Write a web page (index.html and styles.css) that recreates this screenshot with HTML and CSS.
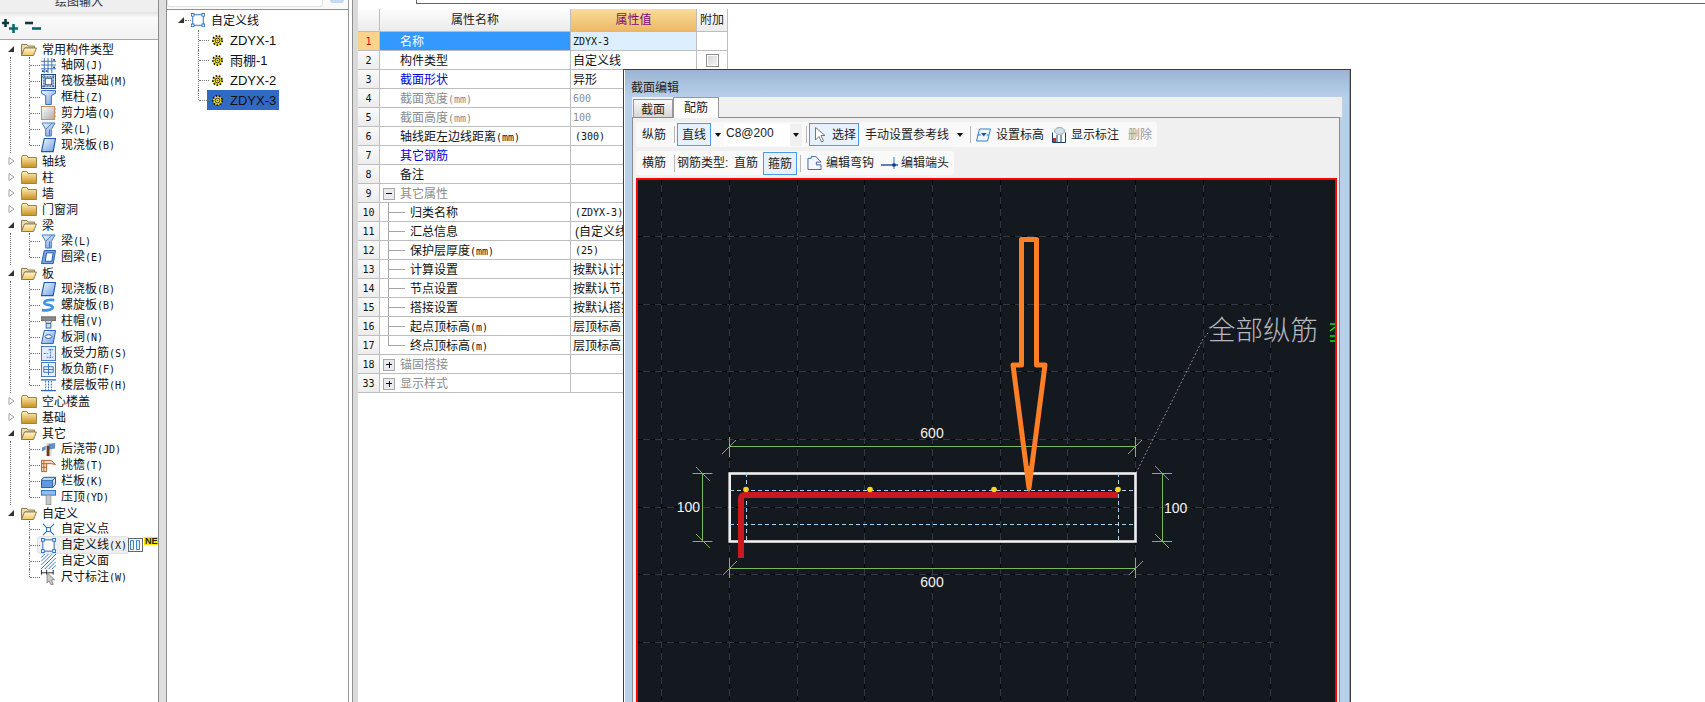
FILE: index.html
```html
<!DOCTYPE html>
<html lang="zh">
<head>
<meta charset="utf-8">
<title>截面编辑</title>
<link rel="stylesheet" href="styles.css">
</head>
<body>
<svg class="defs" aria-hidden="true">
  <defs>
    <linearGradient id="gGold" x1="0" y1="0" x2="0" y2="1"><stop offset="0" stop-color="#fff2b8"/><stop offset="1" stop-color="#c98f1c"/></linearGradient>
    <linearGradient id="gOpen" x1="0" y1="0" x2="0" y2="1"><stop offset="0" stop-color="#fff6d0"/><stop offset="1" stop-color="#f0c560"/></linearGradient>
    <linearGradient id="gBlue" x1="0" y1="0" x2="1" y2="1"><stop offset="0" stop-color="#f2f7fd"/><stop offset="1" stop-color="#6fa0e0"/></linearGradient>
    <linearGradient id="gGray" x1="0" y1="0" x2="1" y2="1"><stop offset="0" stop-color="#fff"/><stop offset="1" stop-color="#aaa"/></linearGradient>
    <symbol id="fClosed" viewBox="0 0 16 13"><path d="M.5 2.500V12.500H15.500V2.500H7L6 .5H1.500Z" fill="url(#gGold)" stroke="#9a8550"/></symbol>
    <symbol id="fOpen" viewBox="0 0 16 13"><path d="M.5 1.500H6L7 3H13.500V5H4L.5 12.500Z" fill="#e9dcae" stroke="#8f7c4c"/><path d="M.5 12.500L3.500 5H15.500L12.500 12.500Z" fill="url(#gOpen)" stroke="#8f7c4c"/></symbol>
    <symbol id="eOpen" viewBox="0 0 8 8"><path d="M7 1V7H1Z" fill="#333"/></symbol>
    <symbol id="eClosed" viewBox="0 0 8 8"><path d="M2 .5L7 4L2 7.500Z" fill="#fff" stroke="#a0a0a0"/></symbol>
    <symbol id="iGrid" viewBox="0 0 16 16"><path d="M3.500 0V16M7.500 0V16M11.500 0V16M0 3.500H16M0 7.500H16M0 11.500H16" stroke="#3a6fb8" fill="none"/><path d="M1 13h2v2H1zM5 13h2v2H5zM13 1h2v2h-2zM13 9h2v2h-2z" fill="#1f4f96"/></symbol>
    <symbol id="iRaft" viewBox="0 0 16 16"><rect x=".5" y=".5" width="15" height="15" fill="#dbe6f5" stroke="#16407f"/><rect x="4.500" y="4.500" width="7" height="7" fill="#fff" stroke="#16407f"/><path d="M0 3H16M0 13H16M3 0V16M13 0V16" stroke="#16407f" stroke-dasharray="2 1"/></symbol>
    <symbol id="iCol" viewBox="0 0 16 16"><path d="M.5 .5H15.500V3.500L11 6V15.500H5V6L.5 3.500Z" fill="url(#gBlue)" stroke="#2f64ae"/></symbol>
    <symbol id="iWall" viewBox="0 0 16 16"><rect x=".5" y=".5" width="14" height="14" fill="url(#gGray)" stroke="#c08a60"/><path d="M15 2V14" stroke="#e07a20" stroke-dasharray="2 2"/></symbol>
    <symbol id="iBeam" viewBox="0 0 16 16"><path d="M1 1H15L11 8V15H5V8Z" fill="url(#gBlue)" stroke="#3b78c4"/><path d="M5 8L12 1M9 8V15" stroke="#3b78c4" fill="none"/></symbol>
    <symbol id="iSlab" viewBox="0 0 16 16"><path d="M3.500 .5H15.500L13 14.500H.5Z" fill="url(#gBlue)" stroke="#1f56a8" stroke-width="1.200"/></symbol>
    <symbol id="iRing" viewBox="0 0 16 16"><path d="M3.500 .5H15.500L13 14.500H.5Z" fill="#7aa6e0" stroke="#1f56a8"/><path d="M6 3H13L11.500 12H4.500Z" fill="#fff" stroke="#1f56a8"/></symbol>
    <symbol id="iSpiral" viewBox="0 0 18 16"><path d="M16 1.500C9 .5 4 2 4 5C4 8 14 6.500 14 10C14 13 7 14.500 1 13.500" fill="none" stroke="#3f93e8" stroke-width="3.200"/></symbol>
    <symbol id="iCap" viewBox="0 0 16 16"><path d="M0 3H16V7H0Z" fill="#888" stroke="#666"/><path d="M4 7H12L10 10H6Z" fill="#ddd" stroke="#777"/><rect x="5.500" y="10" width="5" height="5" fill="#c7dcf5" stroke="#2f64ae"/></symbol>
    <symbol id="iHole" viewBox="0 0 16 16"><path d="M3.500 .5H15.500L13 14.500H.5Z" fill="url(#gBlue)" stroke="#1f56a8"/><ellipse cx="8" cy="7" rx="3.500" ry="2" fill="#fff" stroke="#1f56a8"/></symbol>
    <symbol id="iBar" viewBox="0 0 16 16"><rect x=".5" y=".5" width="15" height="15" fill="#dfeafa" stroke="#3c74c0"/><path d="M8 4H13M10 3V13M3 8H7M6 12H13" stroke="#3c74c0" fill="none" stroke-dasharray="2 1"/></symbol>
    <symbol id="iNeg" viewBox="0 0 16 16"><rect x=".5" y=".5" width="15" height="15" fill="#e9f1fb" stroke="#3c74c0"/><path d="M3 5H13V11H3ZM8 2V14M3 8H13" stroke="#3c74c0" fill="none"/></symbol>
    <symbol id="iBand" viewBox="0 0 16 16"><path d="M0 2H16M0 13.500H16" stroke="#2f64ae" stroke-width="1.400"/><path d="M5 3V13M11 3V13M8 3V13" stroke="#2f64ae" stroke-dasharray="2 1"/></symbol>
    <symbol id="iPost" viewBox="0 0 16 16"><path d="M5 1H12L11 15H8Z" fill="#ddd"/><path d="M5 4L1 6V10L5 8ZM8 2L15 1V7L8 8Z" fill="#5f8fd0"/><rect x="6" y="4" width="3" height="11" fill="#6a3a1c"/></symbol>
    <symbol id="iEave" viewBox="0 0 16 16"><path d="M.5 2.500H11L15.500 7L11 6H6V14.500H.5Z" fill="#f5d8c0" stroke="#b5552a"/><path d="M.5 6H6M.5 10H6M3 3V14" stroke="#c06030"/></symbol>
    <symbol id="iRail" viewBox="0 0 16 16"><path d="M.5 6.500H12.500V14.500H.5Z" fill="#5f9ae0" stroke="#1f4f96"/><path d="M.5 6.500L3 3.500H15.500L12.500 6.500M12.500 14.500L15.500 11V3.500" fill="#bcd5f0" stroke="#1f4f96"/></symbol>
    <symbol id="iCope" viewBox="0 0 16 16"><rect x=".5" y=".5" width="15" height="5" fill="#8fbdf0" stroke="#2f72c4"/><rect x="5.500" y="5.500" width="5" height="10" fill="#c8c8c8" stroke="#999"/></symbol>
    <symbol id="iPoint" viewBox="0 0 16 16"><path d="M2 2L14 14M14 2L2 14" stroke="#2466b8" stroke-width="1.100"/><rect x="6" y="6" width="4" height="4" fill="#fff" stroke="#2466b8"/></symbol>
    <symbol id="iLine" viewBox="0 0 16 16"><rect x="2" y="2" width="12" height="12" fill="#fff" stroke="#1f5fb8"/><path d="M0 0h4v4H0zM12 0h4v4h-4zM0 12h4v4H0zM12 12h4v4h-4z" fill="#2d74d0"/><path d="M1 1h2v2H1zM13 1h2v2h-2zM1 13h2v2H1zM13 13h2v2h-2z" fill="#fff"/></symbol>
    <symbol id="iArea" viewBox="0 0 16 16"><path d="M0 4L4 0M0 8L8 0M0 12L12 0M0 16L16 0M4 16L16 4M8 16L16 8M12 16L16 12" stroke="#2f72d0" fill="none"/></symbol>
    <symbol id="iDim" viewBox="0 0 16 16"><path d="M0 3H13M.5 0V5M6 0V5M13 0V5" stroke="#222" fill="none"/><path d="M6.500 3L14.500 10.500H11L13 15.500H10.500L8.500 11.500L6.500 14Z" fill="#ccc" stroke="#888"/></symbol>
    <symbol id="iBox" viewBox="0 0 15 14"><rect x=".5" y=".5" width="14" height="13" fill="#fff" stroke="#666"/><path d="M2.500 2.500h3v9h-3zM8.500 2.500h3v9h-3z" fill="#e3effc" stroke="#3f80d0"/></symbol>
    <symbol id="iGear" viewBox="0 0 13 13"><circle cx="6.500" cy="6.500" r="4.600" fill="#ffe600" stroke="#111" stroke-dasharray="1.600 1.600" stroke-width="1.800"/><circle cx="6.500" cy="6.500" r="2.400" fill="#ffe600" stroke="#333"/><circle cx="6.500" cy="6.500" r=".8" fill="#333"/></symbol>
    <symbol id="iCursor" viewBox="0 0 11 16"><path d="M.5 .5L10 8.500H6L8.500 14L6.500 15L4 9.500L.5 13Z" fill="#fff" stroke="#777"/></symbol>
    <symbol id="iElev" viewBox="0 0 15 13"><path d="M3.500 .5H14.500L11.500 12.500H.5Z" fill="#f2f8fe" stroke="#2f80c8"/><path d="M5 4.500H10.500L7.800 8Z" fill="#1f4f96"/><path d="M1.500 6.500H5M10.500 6.500H13" stroke="#2f80c8"/></symbol>
    <symbol id="iShow" viewBox="0 0 14 16"><path d="M.5 5.500V15.500H13.500V5.500" fill="#fff" stroke="#1a3f6e"/><path d="M5 8V15.500M9 8V15.500" stroke="#1a3f6e"/><ellipse cx="7.500" cy="4" rx="5" ry="3.500" fill="#d6dfe8" stroke="#8aa"/><rect x="1" y="11" width="3" height="4" fill="#c8301c"/></symbol>
    <symbol id="iHook" viewBox="0 0 15 15"><path d="M.5 14.500V2.500H4V.5H9L14.500 6.500H9.500V9.500H14.500V14.500Z" fill="#f4f7fc" stroke="#3a5fa8"/></symbol>
    <symbol id="iEnd" viewBox="0 0 17 12"><path d="M0 8H17" stroke="#1f4f96" stroke-width="1.400"/><path d="M13 0V12" stroke="#6fa0e0" stroke-width="1.400"/><rect x="11.500" y="6.500" width="3" height="3" fill="#0f2f6e"/></symbol>
  </defs>
</svg>

<div class="app">
  <aside class="left">
    <div class="left-head"><span>绘图输入</span></div>
    <div class="left-tools">
      <svg class="pm" viewBox="0 0 16 15"><path d="M3.500 1V9M0 5H7" stroke="#0a3c3c" stroke-width="2.600"/><path d="M11.500 6V15M7 10.500H16" stroke="#066a6a" stroke-width="2.600"/></svg>
      <svg class="pm gap-pm" viewBox="0 0 16 15"><path d="M0 5H8" stroke="#0a3c3c" stroke-width="2.600"/><path d="M7 10.500H16" stroke="#066a6a" stroke-width="2.600"/></svg>
    </div>
    <div class="tree">
      <div class="root"><svg class="exp"><use href="#eOpen"/></svg><svg class="folder"><use href="#fOpen"/></svg><span>常用构件类型</span></div>
      <div class="kids">
        <div class="leaf"><svg class="ic"><use href="#iGrid"/></svg><span>轴网<span class="lat">(J)</span></span></div>
        <div class="leaf"><svg class="ic"><use href="#iRaft"/></svg><span>筏板基础<span class="lat">(M)</span></span></div>
        <div class="leaf"><svg class="ic"><use href="#iCol"/></svg><span>框柱<span class="lat">(Z)</span></span></div>
        <div class="leaf"><svg class="ic"><use href="#iWall"/></svg><span>剪力墙<span class="lat">(Q)</span></span></div>
        <div class="leaf"><svg class="ic"><use href="#iBeam"/></svg><span>梁<span class="lat">(L)</span></span></div>
        <div class="leaf"><svg class="ic"><use href="#iSlab"/></svg><span>现浇板<span class="lat">(B)</span></span></div>
      </div>
      <div class="root"><svg class="exp"><use href="#eClosed"/></svg><svg class="folder"><use href="#fClosed"/></svg><span>轴线</span></div>
      <div class="root"><svg class="exp"><use href="#eClosed"/></svg><svg class="folder"><use href="#fClosed"/></svg><span>柱</span></div>
      <div class="root"><svg class="exp"><use href="#eClosed"/></svg><svg class="folder"><use href="#fClosed"/></svg><span>墙</span></div>
      <div class="root"><svg class="exp"><use href="#eClosed"/></svg><svg class="folder"><use href="#fClosed"/></svg><span>门窗洞</span></div>
      <div class="root"><svg class="exp"><use href="#eOpen"/></svg><svg class="folder"><use href="#fOpen"/></svg><span>梁</span></div>
      <div class="kids">
        <div class="leaf"><svg class="ic"><use href="#iBeam"/></svg><span>梁<span class="lat">(L)</span></span></div>
        <div class="leaf"><svg class="ic"><use href="#iRing"/></svg><span>圈梁<span class="lat">(E)</span></span></div>
      </div>
      <div class="root"><svg class="exp"><use href="#eOpen"/></svg><svg class="folder"><use href="#fOpen"/></svg><span>板</span></div>
      <div class="kids">
        <div class="leaf"><svg class="ic"><use href="#iSlab"/></svg><span>现浇板<span class="lat">(B)</span></span></div>
        <div class="leaf"><svg class="ic"><use href="#iSpiral"/></svg><span>螺旋板<span class="lat">(B)</span></span></div>
        <div class="leaf"><svg class="ic"><use href="#iCap"/></svg><span>柱帽<span class="lat">(V)</span></span></div>
        <div class="leaf"><svg class="ic"><use href="#iHole"/></svg><span>板洞<span class="lat">(N)</span></span></div>
        <div class="leaf"><svg class="ic"><use href="#iBar"/></svg><span>板受力筋<span class="lat">(S)</span></span></div>
        <div class="leaf"><svg class="ic"><use href="#iNeg"/></svg><span>板负筋<span class="lat">(F)</span></span></div>
        <div class="leaf"><svg class="ic"><use href="#iBand"/></svg><span>楼层板带<span class="lat">(H)</span></span></div>
      </div>
      <div class="root"><svg class="exp"><use href="#eClosed"/></svg><svg class="folder"><use href="#fClosed"/></svg><span>空心楼盖</span></div>
      <div class="root"><svg class="exp"><use href="#eClosed"/></svg><svg class="folder"><use href="#fClosed"/></svg><span>基础</span></div>
      <div class="root"><svg class="exp"><use href="#eOpen"/></svg><svg class="folder"><use href="#fOpen"/></svg><span>其它</span></div>
      <div class="kids">
        <div class="leaf"><svg class="ic"><use href="#iPost"/></svg><span>后浇带<span class="lat">(JD)</span></span></div>
        <div class="leaf"><svg class="ic"><use href="#iEave"/></svg><span>挑檐<span class="lat">(T)</span></span></div>
        <div class="leaf"><svg class="ic"><use href="#iRail"/></svg><span>栏板<span class="lat">(K)</span></span></div>
        <div class="leaf"><svg class="ic"><use href="#iCope"/></svg><span>压顶<span class="lat">(YD)</span></span></div>
      </div>
      <div class="root"><svg class="exp"><use href="#eOpen"/></svg><svg class="folder"><use href="#fOpen"/></svg><span>自定义</span></div>
      <div class="kids last">
        <div class="leaf"><svg class="ic"><use href="#iPoint"/></svg><span>自定义点</span></div>
        <div class="leaf hot"><span class="hot-wrap"><svg class="ic"><use href="#iLine"/></svg><span>自定义线<span class="lat">(X)</span></span></span><svg class="box"><use href="#iBox"/></svg><span class="ne">NE</span></div>
        <div class="leaf"><svg class="ic"><use href="#iArea"/></svg><span>自定义面</span></div>
        <div class="leaf"><svg class="ic"><use href="#iDim"/></svg><span>尺寸标注<span class="lat">(W)</span></span></div>
      </div>
    </div>
  </aside>
  <div class="split"></div>
  <section class="mid">
    <div class="mid-top"><div class="mid-input"></div><div class="mid-btn"></div></div>
    <div class="mid-tree">
      <div class="mroot"><svg class="exp"><use href="#eOpen"/></svg><span class="dots"></span><svg class="mline"><use href="#iLine"/></svg><span>自定义线</span></div>
      <div class="mkids">
        <div class="mleaf"><span class="mitem"><svg class="gear"><use href="#iGear"/></svg>ZDYX-1</span></div>
        <div class="mleaf"><span class="mitem"><svg class="gear"><use href="#iGear"/></svg>雨棚-1</span></div>
        <div class="mleaf"><span class="mitem"><svg class="gear"><use href="#iGear"/></svg>ZDYX-2</span></div>
        <div class="mleaf"><span class="mitem sel"><svg class="gear"><use href="#iGear"/></svg>ZDYX-3</span></div>
      </div>
    </div>
  </section>
  <div class="gutter"></div>
  <main class="main">
    <div class="top-box"></div>
    <table class="props">
      <colgroup><col class="c-no"><col class="c-name"><col class="c-val"><col class="c-add"></colgroup>
      <thead>
        <tr><th class="no"></th><th>属性名称</th><th class="val-h">属性值</th><th>附加</th></tr>
      </thead>
      <tbody>
        <tr><td class="no cur">1</td><td class="name picked">名称</td><td class="val picked-v mono">ZDYX-3</td><td></td></tr>
        <tr><td class="no">2</td><td class="name">构件类型</td><td class="val">自定义线</td><td class="chk"><span class="cb"></span></td></tr>
        <tr><td class="no">3</td><td class="name blue">截面形状</td><td class="val">异形</td><td></td></tr>
        <tr><td class="no">4</td><td class="name grey">截面宽度<span class="lat">(mm)</span></td><td class="val grey mono">600</td><td></td></tr>
        <tr><td class="no">5</td><td class="name grey">截面高度<span class="lat">(mm)</span></td><td class="val grey mono">100</td><td></td></tr>
        <tr><td class="no">6</td><td class="name">轴线距左边线距离<span class="lat">(mm)</span></td><td class="val ind mono">(300)</td><td></td></tr>
        <tr><td class="no">7</td><td class="name blue">其它钢筋</td><td class="val"></td><td></td></tr>
        <tr><td class="no">8</td><td class="name">备注</td><td class="val"></td><td></td></tr>
        <tr><td class="no">9</td><td class="grp grey"><span class="tog minus"></span>其它属性</td><td class="val"></td><td></td></tr>
        <tr><td class="no">10</td><td class="name sub">归类名称</td><td class="val ind mono">(ZDYX-3)</td><td></td></tr>
        <tr><td class="no">11</td><td class="name sub">汇总信息</td><td class="val ind">(自定义线钢筋)</td><td></td></tr>
        <tr><td class="no">12</td><td class="name sub">保护层厚度<span class="lat">(mm)</span></td><td class="val ind mono">(25)</td><td></td></tr>
        <tr><td class="no">13</td><td class="name sub">计算设置</td><td class="val">按默认计算设置</td><td></td></tr>
        <tr><td class="no">14</td><td class="name sub">节点设置</td><td class="val">按默认节点设置</td><td></td></tr>
        <tr><td class="no">15</td><td class="name sub">搭接设置</td><td class="val">按默认搭接设置</td><td></td></tr>
        <tr><td class="no">16</td><td class="name sub">起点顶标高<span class="lat">(m)</span></td><td class="val">层顶标高</td><td></td></tr>
        <tr><td class="no">17</td><td class="name sub end">终点顶标高<span class="lat">(m)</span></td><td class="val">层顶标高</td><td></td></tr>
        <tr><td class="no">18</td><td class="grp grey"><span class="tog plus"></span>锚固搭接</td><td class="val"></td><td></td></tr>
        <tr><td class="no">33</td><td class="grp grey"><span class="tog plus"></span>显示样式</td><td class="val"></td><td></td></tr>
      </tbody>
    </table>
  </main>
</div>

<div class="dialog">
  <div class="frame">
    <div class="title">截面编辑</div>
    <div class="tabs">
      <div class="tab">截面</div>
      <div class="tab on">配筋</div>
    </div>
    <div class="pane">
      <div class="tb tb-a">
        <span class="lbl">纵筋</span>
        <i class="sep s8"></i>
        <span class="btn s2">直线</span>
        <i class="caret s4"></i>
        <span class="combo"><span class="combo-v">C8@200</span><span class="combo-a"><i class="caret"></i></span></span>
        <i class="sep s4"></i>
        <span class="btn btn-sel s2"><svg class="t-cur"><use href="#iCursor"/></svg>选择</span>
        <span class="lbl s6">手动设置参考线</span>
        <i class="caret s8"></i>
        <i class="sep s7"></i>
        <svg class="t-ic s5"><use href="#iElev"/></svg>
        <span class="lbl s5">设置标高</span>
        <svg class="t-ic2 s8"><use href="#iShow"/></svg>
        <span class="lbl s5">显示标注</span>
        <span class="lbl off s9">删除</span>
      </div>
      <div class="tb tb-b">
        <span class="lbl">横筋</span>
        <i class="sep s8"></i>
        <span class="lbl s2 type">钢筋类型:</span>
        <span class="lbl s6">直筋</span>
        <span class="btn s5">箍筋</span>
        <i class="sep s3"></i>
        <svg class="t-ic s6"><use href="#iHook"/></svg>
        <span class="lbl s4">编辑弯钩</span>
        <svg class="t-end s7"><use href="#iEnd"/></svg>
        <span class="lbl s3">编辑端头</span>
      </div>
      <div class="canvas">
        <svg class="draw" viewBox="638 180 697 530" width="697" height="530">
          <path class="gl" d="M661.500 180V710M729.500 180V710M797.500 180V710M864.500 180V710M932.500 180V710M1000.500 180V710M1067.500 180V710M1135.500 180V710M1203.500 180V710M1270.500 180V710"/>
          <path class="gl" d="M638 236.500H1280M638 304.500H1280M638 371.500H1280M638 439.500H1280M638 507.500H1280M638 574.500H1280M638 642.500H1280"/>
          <path class="gd" d="M661.500 180V710M729.500 180V710M797.500 180V710M864.500 180V710M932.500 180V710M1000.500 180V710M1067.500 180V710M1135.500 180V710M1203.500 180V710M1270.500 180V710"/>
          <path class="gd" d="M638 236.500H1280M638 304.500H1280M638 371.500H1280M638 439.500H1280M638 507.500H1280M638 574.500H1280M638 642.500H1280"/>

          <path class="dim" d="M729.500 446.500H1135.500M729.500 437V457M722 454L736 440M1135.500 437V457M1128 454L1142 440"/>
          <path class="dim" d="M729.500 568.500H1135.500M729.500 558V578M723 575L737 561M1135.500 558V578M1129 575L1143 561"/>
          <path class="dim" d="M702.500 473.500V541.500M692.500 473.500H712.500M692.500 541.500H712.500M696 467L710 481M696 534L710 548"/>
          <path class="dim" d="M1162.500 473.500V541.500M1152 473.500H1172M1152 541.500H1172M1155 466L1169 480M1155 534L1169 548"/>

          <path class="lead" d="M1136 473L1203 339L1208 333"/>
          <rect class="beam" x="729.700" y="473.500" width="405.800" height="68"/>
          <path class="cut" d="M730 490.500H1135M730 524.500H1135M746.500 473V541M1118.500 473V541"/>
          <path class="bar" d="M741 558V499Q741 495 745 495H1118"/>
          <circle class="pt" cx="746" cy="489.500" r="2.800"/><circle class="pt" cx="870" cy="489.500" r="2.800"/><circle class="pt" cx="994" cy="489.500" r="2.800"/><circle class="pt" cx="1118" cy="489.500" r="2.800"/>
          <path class="arrow" d="M1021.500 365V239.500H1036.500V365H1045L1029 488L1013 365Z"/>
          <path class="tip" d="M1025 466H1033L1029.500 492H1028.500Z"/>

          <text class="dimt" x="932" y="437.500" text-anchor="middle">600</text>
          <text class="dimt" x="932" y="586.500" text-anchor="middle">600</text>
          <text class="dimt" x="700" y="512" text-anchor="end">100</text>
          <text class="dimt" x="1164" y="512.500">100</text>
          <text class="note" x="1208" y="340">全部纵筋</text>
          <path class="gmark" d="M1330 324H1335M1330 331L1335 327M1330 336H1335M1330 341H1335"/>
        </svg>
      </div>
    </div>
  </div>
</div>
</body>
</html>
```
FILE: styles.css
```css
* { box-sizing: border-box; }
html, body { margin: 0; height: 702px; overflow: hidden; background: #fff; }
body {
  font-family: "Liberation Sans", "Noto Sans CJK SC", sans-serif;
  font-size: 12px;
  line-height: 16px;
  color: #111;
  position: relative;
}
.defs { position: absolute; width: 0; height: 0; overflow: hidden; }
.lat { font-family: "DejaVu Sans Mono", monospace; font-size: 10px; line-height: 0; }

.app { display: flex; width: 1705px; height: 702px; }

/* left panel */
.left { width: 159px; height: 702px; border-right: 1px solid #8a8a8a; flex: none; overflow: hidden; }
.left-head { height: 12px; overflow: hidden; background: #efefef; text-align: center; color: #333; }
.left-head span { display: block; margin-top: -6px; line-height: 16px; }
.left-tools {
  height: 28px; display: flex; align-items: center; padding-left: 2px;
  background: linear-gradient(#e2e2e2, #fafafa 20%, #f2f2f2);
  border-bottom: 1px solid #a8a8a8;
}
.pm { width: 16px; height: 15px; }
.gap-pm { margin-left: 7px; }
.tree { padding-top: 1px; }
.root { height: 16px; display: flex; align-items: center; white-space: nowrap; padding-left: 7px; }
.root > span { padding-top: 1px; }
.exp { width: 8px; height: 8px; flex: none; }
.folder { width: 16px; height: 13px; margin-left: 6px; margin-right: 5px; flex: none; }
.kids { margin-left: 10px; border-left: 1px dotted #777; }
.kids.last { border-left-color: transparent; }
.leaf { position: relative; height: 16px; display: flex; align-items: center; padding-left: 30px; white-space: nowrap; }
.leaf::before { content: ""; position: absolute; left: 18px; top: 0; bottom: 0; border-left: 1px dotted #777; }
.leaf::after { content: ""; position: absolute; left: 19px; width: 10px; top: 8px; border-top: 1px dotted #777; }
.leaf:last-child::before { bottom: 8px; }
.ic { width: 15px; height: 15px; margin-right: 5px; flex: none; }
.hot-wrap {
  display: flex; align-items: center; height: 16px; margin-left: -3px; padding-left: 3px; padding-right: 1px;
  background: #eeeeee; border-radius: 3px; box-shadow: 0 0 0 1px #e2e2e2;
}
.box { width: 15px; height: 14px; flex: none; }
.ne {
  background: #ffe000; font-size: 9px; font-weight: bold; line-height: 8px; height: 8px;
  padding: 0 1px; margin: -8px 0 0 1px; color: #222;
}

.split { width: 7px; flex: none; background: #dedede; }

/* middle panel */
.mid { width: 183px; height: 702px; flex: none; border-left: 1px solid #8f8f8f; border-right: 1px solid #9a9a9a; }
.mid-top { height: 10px; display: flex; background: #f9f9f9; border-bottom: 1px solid #909090; }
.mid-input { width: 156px; height: 7px; background: #fff; border: 1px solid #e2e2e2; border-top: 0; border-radius: 0 0 3px 3px; }
.mid-btn { width: 14px; height: 3px; margin-left: 7px; background: #c4daf2; border-radius: 0 0 4px 4px; }
.mroot { height: 20px; display: flex; align-items: center; padding-left: 10px; white-space: nowrap; }
.mroot > span:last-child { padding-top: 2px; }
.dots { width: 6px; border-top: 1px dotted #777; }
.mline { width: 14px; height: 14px; margin-right: 6px; flex: none; }
.mkids { margin-left: 31px; }
.mleaf { position: relative; height: 20px; display: flex; align-items: center; padding-left: 9px; white-space: nowrap; }
.mleaf::before { content: ""; position: absolute; left: 0; top: 0; bottom: 0; border-left: 1px dotted #777; }
.mleaf:last-child::before { bottom: 10px; }
.mleaf::after { content: ""; position: absolute; left: 1px; top: 10px; width: 10px; border-top: 1px dotted #777; }
.mitem { display: flex; align-items: center; height: 20px; padding: 1px 3px 0 4px; font-size: 13px; }
.mitem.sel { background: #316ac5; }
.gear { width: 13px; height: 13px; margin-right: 6px; flex: none; position: relative; z-index: 1; }

.gutter { width: 9px; flex: none; background: linear-gradient(90deg, #fff 3px, #8f8f8f 3px, #8f8f8f 4px, #dadada 4px); }

/* property grid */
.main { flex: 1; min-width: 0; }
.top-box { height: 4px; margin: 0 0 5px 58px; border-left: 1px solid #666; border-bottom: 1px solid #666; }
.props { border-collapse: separate; border-spacing: 0; table-layout: fixed; width: 370px; white-space: nowrap; }
.c-no { width: 22px; } .c-name { width: 191px; } .c-val { width: 126px; } .c-add { width: 31px; }
.props th, .props td { border-right: 1px solid #bdbdbd; border-bottom: 1px solid #bdbdbd; padding: 0; overflow: hidden; }
.props th {
  height: 23px; font-weight: normal; font-size: 12px; color: #222;
  background: linear-gradient(#fdfdfd, #ececec);
}
.props th.val-h { background: linear-gradient(#f9dc9c, #efb863); color: #7a0a80; }
.props td { height: 19px; line-height: 16px; padding-top: 1px; }
.props td.no {
  text-align: center; background: linear-gradient(#fafafa, #ececec);
  font-family: "DejaVu Sans Mono", monospace; font-size: 10px;
}
.props td.cur { background: #fbd38a; color: #a8201a; }
.name { padding-left: 20px !important; }
.sub {
  padding-left: 30px !important;
  background:
    linear-gradient(#a5a5a5, #a5a5a5) 8px 0 / 1px 100% no-repeat,
    linear-gradient(#a5a5a5, #a5a5a5) 8px 9px / 17px 1px no-repeat;
}
.sub.end {
  background:
    linear-gradient(#a5a5a5, #a5a5a5) 8px 0 / 1px 10px no-repeat,
    linear-gradient(#a5a5a5, #a5a5a5) 8px 9px / 17px 1px no-repeat;
}
.picked { background: #3399ff; color: #fff; }
.picked-v { background: #ddeeff; }
.blue { color: #0000e0; }
.grey, .grey .lat { color: #8c8c8c; }
.val { padding-left: 2px !important; }
.ind { padding-left: 4px !important; }
.mono { font-family: "DejaVu Sans Mono", monospace; font-size: 10px; }
.chk { text-align: center; }
.cb { display: inline-block; width: 13px; height: 13px; vertical-align: -2px; border: 1px solid #8c8c8c; background: linear-gradient(135deg, #d4d4d4, #f6f6f6); box-shadow: inset 0 0 0 1px #fff; }
.grp { padding-left: 3px !important; }
.tog { display: inline-block; width: 12px; height: 12px; margin-right: 5px; vertical-align: -2px; border: 1px solid #a8a8a8; background-color: #e8eaf0; }
.tog.minus { background-image: linear-gradient(#111, #111); background-size: 6px 1px; background-position: center; background-repeat: no-repeat; }
.tog.plus {
  background-image: linear-gradient(#111, #111), linear-gradient(#111, #111);
  background-size: 6px 1px, 1px 6px; background-position: center; background-repeat: no-repeat;
}

/* dialog */
.dialog { position: absolute; left: 623px; top: 69px; width: 728px; height: 633px; border: 1px solid #3c3c3c; border-bottom: 0; background: #fff; overflow: hidden; }
.frame {
  height: 100%; padding: 0 7px 0 7px;
  border-left: 1px solid #fff; border-right: 1px solid #45b4e6;
  background: linear-gradient(#9ab5d2, #b9d0ea 28px);
}
.title { height: 27px; padding-top: 10px; line-height: 16px; margin-left: -1px; color: #222; }
.tabs { height: 20px; background: #f0f0f0; display: flex; align-items: flex-end; padding-left: 1px; width: 710px; }
.tab {
  width: 40px; height: 18px; text-align: center; line-height: 20px; border: 1px solid #999; border-bottom: 0;
  background: linear-gradient(#fbfbfb, #d6d6d6); color: #222;
}
.tab.on { width: 46px; height: 21px; line-height: 20px; background: #fff; margin-bottom: -1px; position: relative; z-index: 1; }
.pane { width: 708px; height: 600px; border: 1px solid #8c8c8c; background: #f0f0f0; padding: 4px 2px 0 3px; margin-right: 2px; }
.tb { display: flex; align-items: center; background: #f9f9f9; border-radius: 3px; white-space: nowrap; padding-left: 6px; color: #222; }
.tb-a { height: 25px; width: 521px; }
.tb-b { height: 24px; width: 318px; margin-top: 4px; }
.lbl { line-height: 18px; flex: none; }
.lbl.off { color: #999; }
.type { width: 51px; }
.sep { width: 1px; height: 17px; background: #b8b8b8; flex: none; }
.caret { width: 0; height: 0; border: 3.5px solid transparent; border-top: 4px solid #111; border-bottom: 0; flex: none; }
.btn {
  display: flex; align-items: center; justify-content: center; flex: none;
  width: 34px; height: 23px; border: 1px solid #4a9be8; background: #e6f1fc;
  padding-top: 1px;
}
.btn-sel { width: 50px; justify-content: flex-start; padding-left: 5px; }
.t-cur { width: 11px; height: 16px; margin-right: 6px; }
.combo { display: flex; width: 78px; height: 22px; margin-left: 3px; background: #fff; flex: none; }
.combo-v { width: 66px; padding-left: 2px; line-height: 18px; }
.combo-a { width: 12px; background: #f0f0f0; display: flex; align-items: center; justify-content: center; }
.t-ic { width: 15px; height: 14px; flex: none; }
.t-ic2 { width: 14px; height: 16px; flex: none; }
.t-end { width: 17px; height: 12px; flex: none; }
.s2 { margin-left: 2px; } .s3 { margin-left: 3px; } .s4 { margin-left: 4px; } .s5 { margin-left: 5px; }
.s6 { margin-left: 6px; } .s7 { margin-left: 7px; } .s8 { margin-left: 8px; } .s9 { margin-left: 9px; }
.canvas { width: 701px; height: 530px; margin-top: 3px; border: 2px solid #ff0000; border-bottom: 0; background: #14181f; }
.draw { display: block; }

.gl { stroke: #323946; stroke-width: 1; fill: none; }
.gd { stroke: #020305; stroke-width: 1; fill: none; stroke-dasharray: 5 7; }
.dim { stroke: #79b95c; stroke-width: 1; fill: none; }
.lead { stroke: #8a8a8a; stroke-width: 1; fill: none; stroke-dasharray: 2 2; }
.beam { fill: none; stroke: #f0f0f0; stroke-width: 2.6; }
.cut { stroke: #a9d3f5; stroke-width: 1; fill: none; stroke-dasharray: 4 3; }
.bar { stroke: #c81a20; stroke-width: 6; fill: none; }
.pt { fill: #f7d917; }
.arrow { fill: none; stroke: #ff7f27; stroke-width: 5; stroke-linejoin: round; }
.tip { fill: #ff7f27; }
.dimt { fill: #f4f4f4; font: 14px "Liberation Sans", sans-serif; }
.note { fill: #b4b8bc; font: 300 27.500px "Noto Sans CJK SC", sans-serif; }
.gmark { stroke: #19e019; stroke-width: 1.500; fill: none; }
```
